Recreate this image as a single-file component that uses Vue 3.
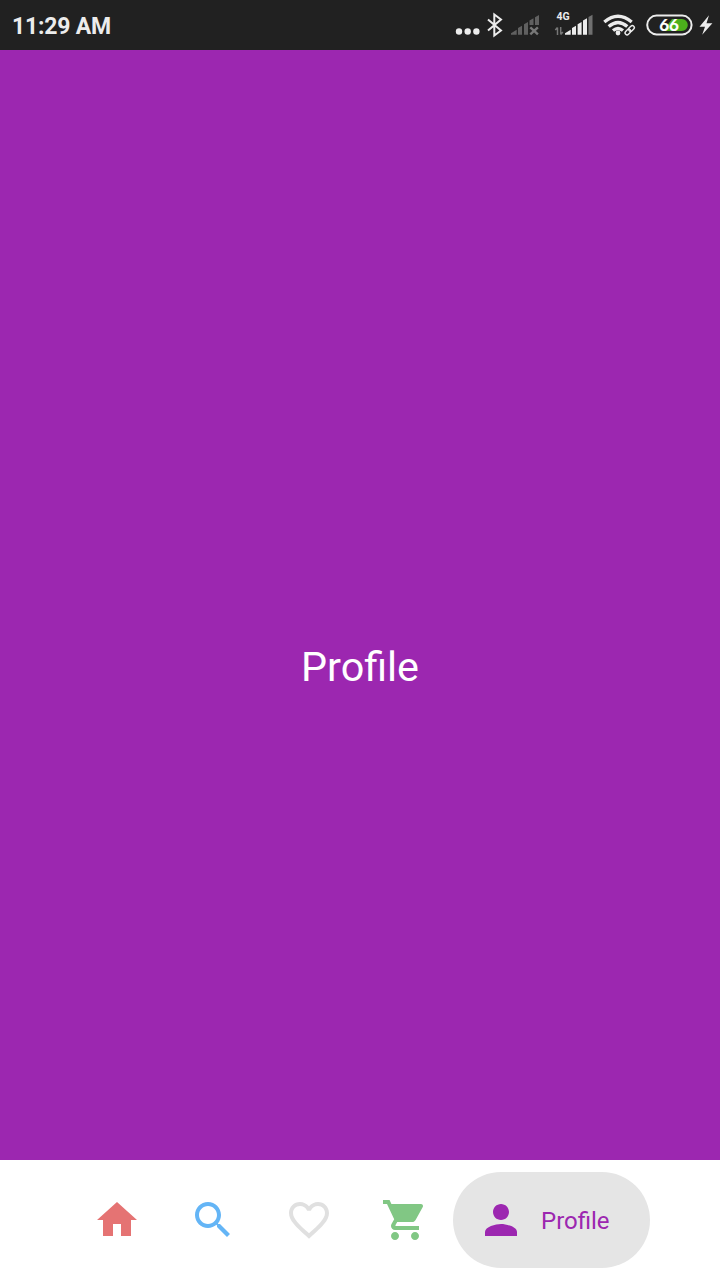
<script setup>
const items = [
  { name: 'Home', color: '#e57373', path: 'M10 20v-6h4v6h5v-8h3L12 3 2 12h3v8z' },
  { name: 'Search', color: '#64b5f6', path: 'M15.5 14h-.79l-.28-.27C15.41 12.59 16 11.11 16 9.5 16 5.91 13.09 3 9.5 3S3 5.91 3 9.5 5.91 16 9.5 16c1.61 0 3.09-.59 4.23-1.57l.27.28v.79l5 4.99L20.49 19l-4.99-5zm-6 0C7.01 14 5 11.99 5 9.5S7.01 5 9.5 5 14 7.01 14 9.5 11.99 14 9.5 14z' },
  { name: 'Likes', color: '#e0e0e0', path: 'M16.5 3c-1.74 0-3.41.81-4.5 2.09C10.91 3.81 9.24 3 7.5 3 4.42 3 2 5.42 2 8.5c0 3.78 3.4 6.86 8.55 11.54L12 21.35l1.45-1.32C18.6 15.36 22 12.28 22 8.5 22 5.42 19.58 3 16.5 3zm-4.4 15.55l-.1.1-.1-.1C7.14 14.24 4 11.39 4 8.5 4 6.5 5.5 5 7.5 5c1.54 0 3.04.99 3.57 2.36h1.87C13.46 5.99 14.96 5 16.5 5c2 0 3.5 1.5 3.5 3.5 0 2.89-3.14 5.74-7.9 10.05z' },
  { name: 'Cart', color: '#81c784', path: 'M7 18c-1.1 0-1.99.9-1.99 2S5.9 22 7 22s2-.9 2-2-.9-2-2-2zM1 2v2h2l3.6 7.59-1.35 2.45c-.16.28-.25.61-.25.96 0 1.1.9 2 2 2h12v-2H7.42c-.14 0-.25-.11-.25-.25l.03-.12.9-1.63h7.45c.75 0 1.41-.41 1.75-1.03l3.58-6.49c.08-.14.12-.31.12-.48 0-.55-.45-1-1-1H5.21l-.94-2H1zm16 16c-1.1 0-1.99.9-1.99 2s.89 2 1.99 2 2-.9 2-2-.9-2-2-2z' },
]
</script>

<template>
  <div class="screen">
    <header class="status">
      <span class="clock">11:29 AM</span>
      <div class="indicators">
        <svg width="34" height="50" viewBox="450 0 34 50" fill="#ececec">
          <circle cx="459" cy="31.5" r="3.2" /><circle cx="467.7" cy="31.5" r="3.2" /><circle cx="476.4" cy="31.5" r="3.2" />
        </svg>
        <svg width="22" height="50" viewBox="484 0 22 50" fill="none" stroke="#ececec" stroke-width="2">
          <path d="M488 19.5L501 30.5L494.3 35.6V14.4L501 19.5L488 30.5" />
        </svg>
        <svg width="39" height="50" viewBox="506 0 39 50" fill="#606060">
          <path d="M511 34.7v-1.5l5.7-3.5v5zM518 34.7v-6.8l4-2.2v9zM524 34.7v-10.4l4-2.2v12.6zM529.5 25v-4.5l4-2.2V25zM535 25v-7.7l4-2.3v10z" />
          <path d="M530.3 27.3l7.6 7M537.9 27.3l-7.6 7" stroke="#777" stroke-width="2.4" />
        </svg>
        <svg width="53" height="50" viewBox="545 0 53 50" fill="#ececec">
          <text class="network" x="556.5" y="20">4G</text>
          <path d="M557.5 35v-7.5M555.3 30l2.2-2.5M560.7 27v7.5M560.7 34.5l2.2-2.5" fill="none" stroke="#777" stroke-width="1.5" />
          <path d="M565 34.7v-1.5l5.7-3.5v5zM572 34.7v-6.8l4-2.2v9zM577.6 34.7v-10.4l4-2.2v12.6zM583 34.7V20.4l4-2.2v16.5z" />
          <path d="M588.5 34.7V17l4-2.3v20z" fill="#707070" />
        </svg>
        <svg width="43" height="50" viewBox="598 0 43 50" fill="none" stroke="#ececec">
          <path d="M604.3 22Q618 10.4 631.7 22M608.7 26.5Q618 18.4 627.3 26.5M613 30.6Q618 26.4 623 30.6" stroke-width="3.3" />
          <circle cx="618" cy="33" r="2.4" fill="#ececec" stroke="none" />
          <g transform="rotate(-45 629.7 30.2)" stroke="#212121" stroke-width="3.4">
            <rect x="624" y="28.2" width="6.4" height="4" rx="2" /><rect x="629" y="28.2" width="6.4" height="4" rx="2" />
          </g>
          <g transform="rotate(-45 629.7 30.2)" stroke-width="1.4">
            <rect x="624" y="28.2" width="6.4" height="4" rx="2" /><rect x="629" y="28.2" width="6.4" height="4" rx="2" />
          </g>
        </svg>
        <svg width="55" height="50" viewBox="641 0 55 50">
          <rect x="647.2" y="15.6" width="44.4" height="18.8" rx="9.4" fill="none" stroke="#ececec" stroke-width="2" />
          <path d="M672 19h9.8a6 6 0 0 1 0 12H663z" fill="#4caf1c" />
          <text class="charge" x="669" y="31" text-anchor="middle">66</text>
        </svg>
        <svg width="24" height="50" viewBox="696 0 24 50" fill="#ececec">
          <path d="M709 15.2L699.5 26.8H705L702.2 34.8L712.4 23.2H706.5z" />
        </svg>
      </div>
    </header>
    <main class="page">Profile</main>
    <nav class="nav">
      <svg v-for="item in items" :key="item.name" class="icon" viewBox="0 0 24 24" :fill="item.color" :aria-label="item.name">
        <path :d="item.path" />
      </svg>
      <div class="active">
        <svg class="icon" viewBox="0 0 24 24" fill="#9c27b0">
          <path d="M12 12c2.21 0 4-1.79 4-4s-1.79-4-4-4-4 1.79-4 4 1.79 4 4 4zm0 2c-2.67 0-8 1.34-8 4v2h16v-2c0-2.66-5.33-4-8-4z" />
        </svg>
        <span class="label">Profile</span>
      </div>
    </nav>
  </div>
</template>

<style>
body { margin: 0; }
</style>

<style scoped>
.screen {
  display: flex;
  flex-direction: column;
  width: 720px;
  height: 1280px;
  overflow: hidden;
  font-family: Roboto, "Liberation Sans", sans-serif;
}
.status {
  display: flex;
  justify-content: space-between;
  height: 50px;
  background: #212121;
}
.clock {
  padding: 2px 0 0 12px;
  color: #ececec;
  font-size: 23px;
  font-weight: 700;
  letter-spacing: -0.2px;
  line-height: 48px;
  padding-top: 3px;
}
.indicators { display: flex; }
.network { font-size: 10.5px; font-weight: 700; }
.charge {
  font-family: Lato, sans-serif;
  font-size: 17px;
  font-weight: 700;
  fill: #fff;
  stroke: #fff;
  stroke-width: 0.2px;
}
.page {
  display: flex;
  flex: 1;
  align-items: center;
  justify-content: center;
  box-sizing: border-box;
  padding-top: 124px;
  background: #9c27b0;
  color: #fff;
  font-size: 41.3px;
}
.nav {
  display: flex;
  align-items: center;
  gap: 48px;
  box-sizing: border-box;
  height: 120px;
  padding-left: 93px;
  background: #fff;
}
.icon { flex: none; width: 48px; height: 48px; }
.active {
  display: flex;
  align-items: center;
  gap: 16px;
  box-sizing: border-box;
  width: 197px;
  height: 96px;
  margin-left: -24px;
  padding-left: 24px;
  border-radius: 48px;
  background: #e5e5e5;
}
.label {
  padding-top: 2px;
  color: #9c27b0;
  font-size: 24px;
  white-space: nowrap;
}
</style>
